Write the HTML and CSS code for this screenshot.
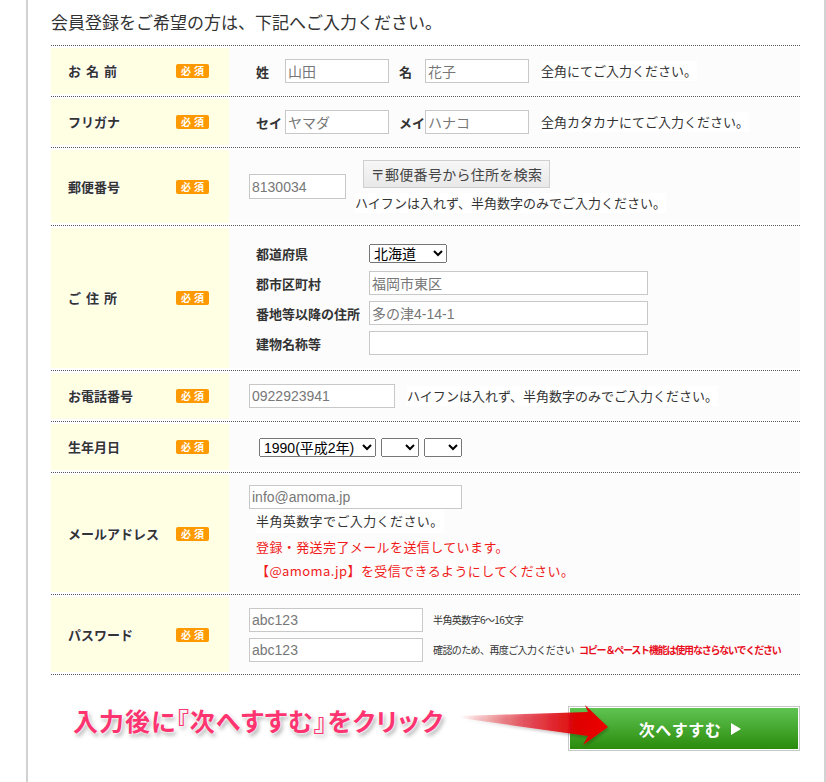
FILE: index.html
```html
<!DOCTYPE html>
<html lang="ja">
<head>
<meta charset="utf-8">
<title>会員登録</title>
<link rel="stylesheet" href="styles.css">
</head>
<body>
<div class="page">
  <h1 class="title">会員登録をご希望の方は、下記へご入力ください。</h1>
  <div class="form">
    <div class="row r51">
      <div class="label"><span class="ltext sp">お 名 前</span><span class="badge">必須</span></div>
      <div class="value pl27">
        <span class="sub">姓</span><input class="in w104" value="山田"><span class="sub sub2">名</span><input class="in w104" value="花子"><span class="note ml12">全角にてご入力ください。</span>
      </div>
    </div>
    <div class="row r51">
      <div class="label"><span class="ltext">フリガナ</span><span class="badge">必須</span></div>
      <div class="value pl27">
        <span class="sub">セイ</span><input class="in w104" value="ヤマダ"><span class="sub sub2">メイ</span><input class="in w104" value="ハナコ"><span class="note ml12">全角カタカナにてご入力ください。</span>
      </div>
    </div>
    <div class="row r78">
      <div class="label"><span class="ltext">郵便番号</span><span class="badge">必須</span></div>
      <div class="value pl20">
        <input class="in w97" value="8130034">
        <div class="zipside">
          <button class="zipbtn" type="button">〒郵便番号から住所を検索</button>
          <span class="note zipnote">ハイフンは入れず、半角数字のみでご入力ください。</span>
        </div>
      </div>
    </div>
    <div class="row r145">
      <div class="label"><span class="ltext sp">ご 住 所</span><span class="badge">必須</span></div>
      <div class="value pl27">
        <div class="addr">
          <span class="alabel">都道府県</span><select class="pref"><option>北海道</option></select>
          <span class="alabel">郡市区町村</span><input class="in w279" value="福岡市東区">
          <span class="alabel">番地等以降の住所</span><input class="in w279" value="多の津4-14-1">
          <span class="alabel">建物名称等</span><input class="in w279" value="">
        </div>
      </div>
    </div>
    <div class="row r51">
      <div class="label"><span class="ltext">お電話番号</span><span class="badge">必須</span></div>
      <div class="value pl20">
        <input class="in w146" value="0922923941"><span class="note ml12">ハイフンは入れず、半角数字のみでご入力ください。</span>
      </div>
    </div>
    <div class="row r51">
      <div class="label"><span class="ltext">生年月日</span><span class="badge">必須</span></div>
      <div class="value pl30">
        <select class="sel w117"><option>1990(平成2年)</option></select>
        <select class="sel w38"><option></option></select>
        <select class="sel w38"><option></option></select>
      </div>
    </div>
    <div class="row r122">
      <div class="label"><span class="ltext">メールアドレス</span><span class="badge">必須</span></div>
      <div class="value pl20 col em">
        <input class="in w213" value="info@amoma.jp">
        <p class="emnote">半角英数字でご入力ください。</p>
        <p class="red">登録・発送完了メールを送信しています。<br>【@amoma.jp】を受信できるようにしてください。</p>
      </div>
    </div>
    <div class="row r80">
      <div class="label"><span class="ltext">パスワード</span><span class="badge">必須</span></div>
      <div class="value pl20 col pw">
        <div class="pwline"><input class="in w174" value="abc123"><span class="small">半角英数字6〜16文字</span></div>
        <div class="pwline"><input class="in w174" value="abc123"><span class="small">確認のため、再度ご入力ください</span><span class="small redb">コピー＆ペースト機能は使用なさらないでください</span></div>
      </div>
    </div>
  </div>
  <div class="bottom">
    <p class="cta">入力後に『次へすすむ』をクリック</p>
    <button class="next" type="button"><span class="next-in">次へすすむ<svg class="tri" viewBox="0 0 10 12" width="10" height="12"><polygon points="0,0 10,6 0,12" fill="#fff"/></svg></span></button>
    <svg class="arrow" viewBox="455 698 160 52" width="160" height="52">
      <defs>
        <linearGradient id="ag" x1="460" y1="0" x2="610" y2="0" gradientUnits="userSpaceOnUse">
          <stop offset="0" stop-color="#e01010" stop-opacity="0"/>
          <stop offset="0.45" stop-color="#e02030" stop-opacity="0.75"/>
          <stop offset="0.8" stop-color="#e00000" stop-opacity="1"/>
          <stop offset="1" stop-color="#ee0000" stop-opacity="1"/>
        </linearGradient>
        <filter id="sh" x="-10%" y="-30%" width="130%" height="170%">
          <feGaussianBlur in="SourceAlpha" stdDeviation="1.5"/>
          <feOffset dx="1" dy="2" result="b"/>
          <feComponentTransfer><feFuncA type="linear" slope="0.25"/></feComponentTransfer>
          <feMerge><feMergeNode/><feMergeNode in="SourceGraphic"/></feMerge>
        </filter>
      </defs>
      <polygon points="460,716 588,712 585,705 608,727 583,745 588,736 460,718" fill="url(#ag)" filter="url(#sh)"/>
    </svg>
  </div>
</div>
</body>
</html>
```
FILE: styles.css
```css
html, body {
  margin: 0;
  padding: 0;
  background: #fff;
}
body {
  font-family: "Noto Sans CJK JP", "Noto Sans", sans-serif;
  color: #333;
  font-size: 13px;
}
.page {
  box-sizing: border-box;
  margin-left: 26px;
  width: 800px;
  min-height: 782px;
  border-left: 2px solid #d2d2d2;
  border-right: 2px solid #d2d2d2;
  padding: 10px 0 0 23px;
}
.title {
  margin: 0 0 11px 0;
  font-size: 17px;
  line-height: 24px;
  font-weight: normal;
  color: #333;
}
.form {
  width: 749px;
  border-top: 1px dotted #555;
}
.row {
  box-sizing: border-box;
  display: flex;
  padding: 2px 0;
  border-bottom: 1px dotted #555;
}
.r51 { height: 51px; }
.r78 { height: 78px; }
.r145 { height: 145px; }
.r122 { height: 122px; }
.r80 { height: 80px; }

.label {
  width: 178px;
  box-sizing: border-box;
  background: #ffffe4;
  display: flex;
  align-items: center;
  padding-left: 17px;
}
.ltext {
  width: 108px;
  font-weight: bold;
  font-size: 13px;
  line-height: 18px;
  color: #333;
  text-shadow: 0 0 2px #fff, 0 0 2px #fff, 0 0 1px #fff;
}
.ltext.sp {
  white-space: pre;
  letter-spacing: 1px;
}
.badge {
  box-sizing: border-box;
  width: 33px;
  height: 14px;
  background: #ff9900;
  border-radius: 2px;
  color: #fff;
  font-weight: bold;
  font-size: 10px;
  line-height: 14px;
  letter-spacing: 3px;
  text-indent: 3px;
  text-align: center;
}
.value {
  flex: 1;
  box-sizing: border-box;
  background: #fcfcfc;
  display: flex;
  align-items: center;
}
.pl27 { padding-left: 27px; }
.pl20 { padding-left: 20px; }
.pl30 { padding-left: 30px; }
.value.col {
  flex-direction: column;
  align-items: flex-start;
}
.value.em {
  padding-top: 10px;
}
.sub {
  width: 29px;
  font-weight: bold;
  font-size: 13px;
  white-space: nowrap;
}
.sub.sub2 {
  width: 26px;
  margin-left: 10px;
}
.in {
  box-sizing: border-box;
  height: 24px;
  border: 1px solid #c8c8c8;
  background: #fff;
  padding: 0 2px;
  margin: 0;
  font-family: "Liberation Sans", "Noto Sans CJK JP", sans-serif;
  font-size: 14px;
  color: #777;
  outline: none;
}
.w97 { width: 97px; height: 25px; }
.w104 { width: 104px; }
.w146 { width: 146px; }
.w174 { width: 174px; }
.w213 { width: 213px; }
.w279 { width: 279px; }
.note {
  background: #fff;
  font-size: 13px;
  line-height: 20px;
  color: #333;
  white-space: nowrap;
}
.ml12 { margin-left: 12px; }
.zipside {
  display: flex;
  flex-direction: column;
  align-items: flex-start;
  margin-left: 9px;
}
.zipbtn {
  box-sizing: border-box;
  margin: 0 0 0 8px;
  width: 187px;
  height: 28px;
  padding: 0;
  border: 1px solid #cfcfcf;
  border-radius: 0;
  background: linear-gradient(#f7f7f7, #e8e8e8);
  font-family: "Noto Sans CJK JP", sans-serif;
  font-size: 14px;
  color: #444;
  line-height: 26px;
  letter-spacing: 0.3px;
}
.zipnote {
  margin-top: 5px;
}
.addr {
  display: grid;
  grid-template-columns: 113px 279px;
  grid-auto-rows: 24px;
  row-gap: 6px;
  align-items: center;
}
.alabel {
  font-weight: bold;
  font-size: 13px;
  line-height: 18px;
  white-space: nowrap;
  position: relative;
  top: 1px;
}
.pref {
  box-sizing: border-box;
  width: 78px;
  height: 19px;
  padding: 0;
  font-family: "Liberation Sans", "Noto Sans CJK JP", sans-serif;
  font-size: 14px;
  color: #000;
}
.sel {
  box-sizing: border-box;
  height: 19px;
  padding: 0;
  margin: 0 5px 0 0;
  font-family: "Liberation Sans", "Noto Sans CJK JP", sans-serif;
  font-size: 14px;
  color: #000;
}
.w117 { width: 117px; }
.w38 { width: 38px; }
.emnote {
  margin: 0 0 0 7px;
  font-size: 13px;
  line-height: 24px;
  background: #fff;
  letter-spacing: 0.4px;
}
.red {
  margin: 2px 0 0 7px;
  font-size: 13px;
  line-height: 24px;
  color: #f01a1a;
  letter-spacing: 0.4px;
}
.pw {
  justify-content: center;
}
.pwline {
  display: flex;
  align-items: center;
}
.pwline + .pwline {
  margin-top: 6px;
}
.small {
  margin-left: 10px;
  font-size: 10px;
  line-height: 14px;
  letter-spacing: -0.6px;
  white-space: nowrap;
  color: #333;
}
.small.redb {
  margin-left: 5px;
  color: #e8101e;
  font-weight: bold;
  letter-spacing: -1.2px;
}
.bottom {
  position: relative;
  width: 749px;
  display: flex;
  align-items: flex-start;
}
.cta {
  margin: 30px 0 0 22px;
  font-size: 25px;
  line-height: 30px;
  font-weight: bold;
  color: #fd3470;
  font-feature-settings: "palt";
  letter-spacing: 1px;
  text-shadow: 0 0 2px #fff, 0 0 3px #fff, 2px 3px 4px rgba(0, 0, 0, 0.35);
  white-space: nowrap;
}
.next {
  margin: 31px 0 0 auto;
  box-sizing: border-box;
  width: 232px;
  height: 45px;
  padding: 1px;
  border: 1px solid #c8c8c8;
  background: #fff;
  cursor: pointer;
}
.next-in {
  display: flex;
  align-items: center;
  justify-content: center;
  gap: 10px;
  height: 100%;
  background: linear-gradient(#60c452, #2a8b0c);
  color: #fff;
  font-family: "Noto Sans CJK JP", sans-serif;
  font-weight: bold;
  font-size: 16px;
  letter-spacing: 0.5px;
  padding-left: 12px;
}
.tri {
  display: block;
}
.arrow {
  position: absolute;
  left: 404px;
  top: 23px;
}
```
